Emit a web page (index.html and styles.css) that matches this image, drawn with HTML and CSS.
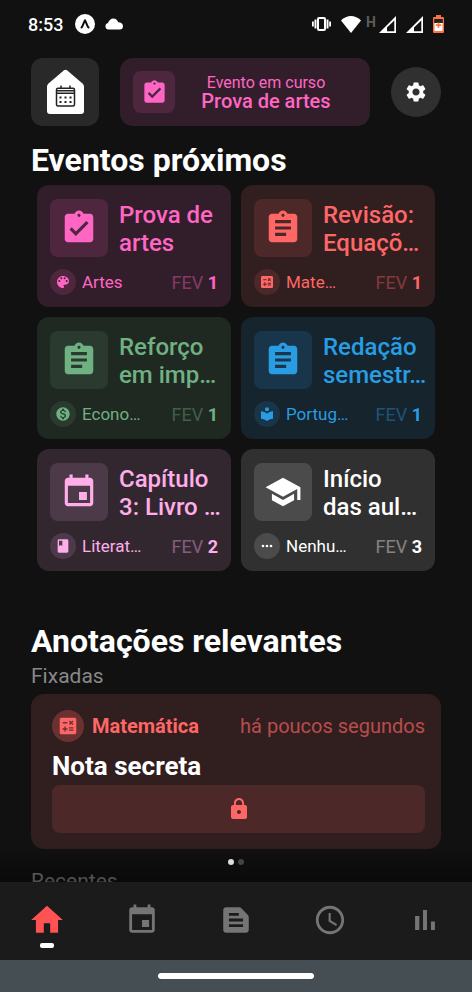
FILE: index.html
```html
<!DOCTYPE html>
<html lang="pt-BR">
<head>
<meta charset="utf-8">
<meta name="viewport" content="width=device-width, initial-scale=1">
<title>Início</title>
<link rel="stylesheet" href="styles.css">
</head>
<body>
<svg class="sprite" aria-hidden="true">
  <symbol id="task-done" viewBox="0 0 24 24"><path d="M19 3h-4.18C14.4 1.84 13.3 1 12 1c-1.3 0-2.4.84-2.82 2H5c-1.1 0-2 .9-2 2v14c0 1.1.9 2 2 2h14c1.1 0 2-.9 2-2V5c0-1.1-.9-2-2-2zm-7 0c.55 0 1 .45 1 1s-.45 1-1 1-1-.45-1-1 .45-1 1-1zm-2 14l-4-4 1.41-1.41L10 14.17l6.59-6.59L18 9l-8 8z"/></symbol>
  <symbol id="task" viewBox="0 0 24 24"><path d="M19 3h-4.18C14.4 1.84 13.3 1 12 1c-1.3 0-2.4.84-2.82 2H5c-1.1 0-2 .9-2 2v14c0 1.1.9 2 2 2h14c1.1 0 2-.9 2-2V5c0-1.1-.9-2-2-2zm-7 0c.55 0 1 .45 1 1s-.45 1-1 1-1-.45-1-1 .45-1 1-1zm2 14H7v-2h7v2zm3-4H7v-2h10v2zm0-4H7V7h10v2z"/></symbol>
  <symbol id="event" viewBox="0 0 24 24"><path d="M17 12h-5v5h5v-5zM16 1v2H8V1H6v2H5c-1.11 0-1.99.9-1.99 2L3 19c0 1.1.89 2 2 2h14c1.1 0 2-.9 2-2V5c0-1.1-.9-2-2-2h-1V1h-2zm3 18H5V8h14v11z"/></symbol>
  <symbol id="school" viewBox="0 0 24 24"><path d="M5 13.18v4L12 21l7-3.82v-4L12 17l-7-3.82zM12 3L1 9l11 6 9-4.91V17h2V9L12 3z"/></symbol>
  <symbol id="palette" viewBox="0 0 24 24"><path d="M12 3c-4.97 0-9 4.03-9 9s4.03 9 9 9c.83 0 1.5-.67 1.5-1.5 0-.39-.15-.74-.39-1.01-.23-.26-.38-.61-.38-.99 0-.83.67-1.5 1.5-1.5H16c2.76 0 5-2.24 5-5 0-4.42-4.03-8-9-8zm-5.5 9c-.83 0-1.5-.67-1.5-1.5S5.67 9 6.5 9 8 9.67 8 10.5 7.33 12 6.5 12zm3-4C8.67 8 8 7.33 8 6.5S8.67 5 9.5 5s1.5.67 1.5 1.5S10.33 8 9.5 8zm5 0c-.83 0-1.5-.67-1.5-1.5S13.67 5 14.5 5s1.5.67 1.5 1.5S15.33 8 14.5 8zm3 4c-.83 0-1.5-.67-1.5-1.5S16.67 9 17.5 9s1.5.67 1.5 1.5-.67 1.5-1.5 1.5z"/></symbol>
  <symbol id="calculate" viewBox="0 0 24 24"><path d="M19 3H5c-1.1 0-2 .9-2 2v14c0 1.1.9 2 2 2h14c1.1 0 2-.9 2-2V5c0-1.1-.9-2-2-2zm-5.97 4.06L14.09 6l1.41 1.41L16.91 6l1.06 1.06-1.41 1.41 1.41 1.41-1.06 1.06-1.41-1.4-1.41 1.41-1.06-1.06 1.41-1.41-1.41-1.42zm-6.78.66h5v1.5h-5v-1.5zM11.5 16h-2v2H8v-2H6v-1.5h2v-2h1.5v2h2V16zm6.5 1.25h-5v-1.5h5v1.5zm0-2.5h-5v-1.5h5v1.5z"/></symbol>
  <symbol id="money" viewBox="0 0 24 24"><path d="M12 2C6.48 2 2 6.48 2 12s4.48 10 10 10 10-4.48 10-10S17.52 2 12 2zm1.41 16.09V20h-2.67v-1.93c-1.71-.36-3.16-1.46-3.27-3.4h1.96c.1 1.05.82 1.87 2.65 1.87 1.96 0 2.4-.98 2.4-1.59 0-.83-.44-1.61-2.67-2.14-2.48-.6-4.18-1.62-4.18-3.67 0-1.72 1.39-2.84 3.11-3.21V4h2.67v1.95c1.86.45 2.79 1.86 2.85 3.39H14.3c-.05-1.11-.64-1.87-2.22-1.87-1.5 0-2.4.68-2.4 1.64 0 .84.65 1.39 2.67 1.91s4.18 1.39 4.18 3.91c-.01 1.83-1.38 2.83-3.12 3.16z"/></symbol>
  <symbol id="library" viewBox="0 0 24 24"><path d="M12 11.55C9.64 9.35 6.48 8 3 8v11c3.48 0 6.64 1.35 9 3.55 2.36-2.19 5.52-3.55 9-3.55V8c-3.48 0-6.64 1.35-9 3.55zM12 8c1.66 0 3-1.34 3-3s-1.34-3-3-3-3 1.34-3 3 1.34 3 3 3z"/></symbol>
  <symbol id="book" viewBox="0 0 24 24"><path d="M18 2H6c-1.1 0-2 .9-2 2v16c0 1.1.9 2 2 2h12c1.1 0 2-.9 2-2V4c0-1.1-.9-2-2-2zM6 4h5v8l-2.500-1.500L6 12V4z"/></symbol>
  <symbol id="more" viewBox="0 0 24 24"><circle cx="6" cy="12" r="2"/><circle cx="12" cy="12" r="2"/><circle cx="18" cy="12" r="2"/></symbol>
  <symbol id="settings" viewBox="0 0 24 24"><path d="M19.14 12.94c.04-.3.06-.61.06-.94 0-.32-.02-.64-.07-.94l2.03-1.58c.18-.14.23-.41.12-.61l-1.92-3.32c-.12-.22-.37-.29-.59-.22l-2.39.96c-.5-.38-1.03-.7-1.62-.94l-.36-2.54c-.04-.24-.24-.41-.48-.41h-3.84c-.24 0-.43.17-.47.41l-.36 2.54c-.59.24-1.13.57-1.62.94l-2.39-.96c-.22-.08-.47 0-.59.22L2.74 8.87c-.12.21-.08.47.12.61l2.03 1.58c-.05.3-.09.63-.09.94s.02.64.07.94l-2.03 1.58c-.18.14-.23.41-.12.61l1.92 3.32c.12.22.37.29.59.22l2.39-.96c.5.38 1.03.7 1.62.94l.36 2.54c.05.24.24.41.48.41h3.84c.24 0 .44-.17.47-.41l.36-2.54c.59-.24 1.13-.56 1.62-.94l2.39.96c.22.08.47 0 .59-.22l1.92-3.32c.12-.22.07-.47-.12-.61l-2.01-1.58zM12 15.600c-1.980 0-3.600-1.620-3.600-3.600s1.620-3.600 3.600-3.600 3.600 1.620 3.600 3.600-1.620 3.600-3.600 3.600z"/></symbol>
  <symbol id="lock" viewBox="0 0 24 24"><path d="M18 8h-1V6c0-2.760-2.240-5-5-5S7 3.240 7 6v2H6c-1.100 0-2 .9-2 2v10c0 1.100.9 2 2 2h12c1.100 0 2-.9 2-2V10c0-1.100-.9-2-2-2zm-6 9c-1.100 0-2-.9-2-2s.9-2 2-2 2 .9 2 2-.9 2-2 2zm3.100-9H8.900V6c0-1.710 1.390-3.100 3.100-3.100 1.710 0 3.100 1.390 3.100 3.100v2z"/></symbol>
  <symbol id="home" viewBox="0 0 24 24"><path d="M10 20v-6h4v6h5v-8h3L12 3 2 12h3v8z"/></symbol>
  <symbol id="note" viewBox="0 0 24 24"><path d="M20.410 8.410l-4.830-4.830c-.37-.37-.88-.58-1.410-.58H5c-1.100 0-2 .9-2 2v14c0 1.100.9 2 2 2h14c1.100 0 2-.9 2-2V9.830c0-.53-.21-1.040-.59-1.420zM7 7h7v2H7V7zm10 10H7v-2h10v2zm0-4H7v-2h10v2z"/></symbol>
  <symbol id="clock" viewBox="0 0 24 24"><path d="M11.990 2C6.470 2 2 6.480 2 12s4.470 10 9.990 10C17.520 22 22 17.520 22 12S17.520 2 11.990 2zM12 20c-4.420 0-8-3.580-8-8s3.580-8 8-8 8 3.580 8 8-3.580 8-8 8zm.5-13H11v6l5.250 3.150.75-1.230-4.500-2.670z"/></symbol>
  <symbol id="chart" viewBox="0 0 24 24"><path d="M5 9.200h3V19H5zM10.600 5h2.800v14h-2.800zm5.600 8H19v6h-2.800z"/></symbol>
  <symbol id="signal" viewBox="0 0 17 17"><path fill-rule="evenodd" d="M17 0V17H0zM15.300 4.500L8 11.500V15.300H15.300z"/></symbol>
</svg>

<div class="app">
  <div class="status">
    <span class="time">8:53</span>
    <svg class="status-app" viewBox="0 0 20 20"><circle cx="10" cy="10" r="10"/><path class="caret" d="M6.500 13.500C8 12 8.600 8.500 10 6.200C11.400 8.500 12 12 13.500 13.500"/></svg>
    <svg class="status-cloud" viewBox="0 0 18 12"><path d="M3.500 11.500A3.300 3.300 0 0 1 3 5C4.200 2 6 .5 8.200.5C10.800.5 12.400 2 13.200 4.300C16 4.300 18 5.800 18 8.200C18 10.200 16.700 11.500 14.800 11.500z"/></svg>
    <div class="status-right">
      <svg class="vibrate" viewBox="0 0 19 14"><rect x="6" y="1" width="7" height="12" rx="1" fill="none" stroke="#fff" stroke-width="2"/><path d="M2.500 2.500h2v9h-2zM0 4.500h1.800v5h-1.800zM14.500 2.500h2v9h-2zM17.200 4.500h1.800v5h-1.800z"/></svg>
      <svg class="wifi" viewBox="0 0 20 17"><path d="M10 17L0 4.500C5.800-1.500 14.200-1.500 20 4.500z"/></svg>
      <div class="mobile"><span class="network">H</span><svg class="bars"><use href="#signal"/></svg></div>
      <svg class="bars"><use href="#signal"/></svg>
      <svg class="battery" viewBox="0 0 11 18"><path fill="#fff" d="M1 8h9v9H1z"/><path fill="#ff7043" fill-rule="evenodd" d="M3 0h5v2h2q1 0 1 1v14q0 1-1 1H1q-1 0-1-1V3q0-1 1-1h2zM1.500 4V16h8V4z"/><path fill="#222" d="M1.500 4h8v4h-8z"/><path fill="#ff7043" d="M4.700 7.500h1.600v1.800h1.900v1.600H6.300v1.900H4.700v-1.900H2.800V9.300h1.900z"/></svg>
    </div>
  </div>

  <main class="content">
    <header class="top">
      <button class="logo" aria-label="Agenda">
        <svg viewBox="0 0 68 68"><path fill="#fff" d="M32.700 12.500Q34.500 11 36.300 12.500L51.500 25.500Q53 26.800 53 28.500V53Q53 56 50 56H19Q16 56 16 53V28.500Q16 26.800 17.500 25.500z"/><g fill="none" stroke="#222" stroke-width="1.500"><rect x="25.500" y="30.300" width="18" height="17.700" rx="1.500"/><path d="M25 32.700H44M25 35.300H44M30 27.500V31M39 27.500V31"/></g><g fill="#222"><path d="M28.500 38.500h2v2h-2zM33.500 38.500h2v2h-2zM38.500 38.500h2v2h-2zM28.500 43h2v2h-2zM33.500 43h2v2h-2zM38.500 43h2v2h-2z"/></g></svg>
      </button>
      <a class="current pink" href="#">
        <span class="tile"><svg><use href="#task-done"/></svg></span>
        <span class="current-text"><span>Evento em curso</span><strong>Prova de artes</strong></span>
      </a>
      <button class="settings" aria-label="Configurações"><svg><use href="#settings"/></svg></button>
    </header>

    <section>
      <h1>Eventos próximos</h1>
      <div class="events">
        <a class="card pink" href="#">
          <span class="card-top"><span class="tile"><svg><use href="#task-done"/></svg></span><span class="title">Prova de<br>artes</span></span>
          <span class="card-foot"><span class="dot"><svg><use href="#palette"/></svg></span><span class="subject">Artes</span><span class="date"><span>FEV</span> <b>1</b></span></span>
        </a>
        <a class="card red" href="#">
          <span class="card-top"><span class="tile"><svg><use href="#task"/></svg></span><span class="title">Revisão:<br>Equaçõ…</span></span>
          <span class="card-foot"><span class="dot"><svg><use href="#calculate"/></svg></span><span class="subject">Mate…</span><span class="date"><span>FEV</span> <b>1</b></span></span>
        </a>
        <a class="card green" href="#">
          <span class="card-top"><span class="tile"><svg><use href="#task"/></svg></span><span class="title">Reforço<br>em imp…</span></span>
          <span class="card-foot"><span class="dot"><svg><use href="#money"/></svg></span><span class="subject">Econo…</span><span class="date"><span>FEV</span> <b>1</b></span></span>
        </a>
        <a class="card blue" href="#">
          <span class="card-top"><span class="tile"><svg><use href="#task"/></svg></span><span class="title">Redação<br>semestr…</span></span>
          <span class="card-foot"><span class="dot"><svg><use href="#library"/></svg></span><span class="subject">Portug…</span><span class="date"><span>FEV</span> <b>1</b></span></span>
        </a>
        <a class="card lilac" href="#">
          <span class="card-top"><span class="tile"><svg><use href="#event"/></svg></span><span class="title">Capítulo<br>3: Livro …</span></span>
          <span class="card-foot"><span class="dot"><svg><use href="#book"/></svg></span><span class="subject">Literat…</span><span class="date"><span>FEV</span> <b>2</b></span></span>
        </a>
        <a class="card gray" href="#">
          <span class="card-top"><span class="tile"><svg><use href="#school"/></svg></span><span class="title">Início<br>das aul…</span></span>
          <span class="card-foot"><span class="dot"><svg><use href="#more"/></svg></span><span class="subject">Nenhu…</span><span class="date"><span>FEV</span> <b>3</b></span></span>
        </a>
      </div>
    </section>

    <section class="notes">
      <h1>Anotações relevantes</h1>
      <h2>Fixadas</h2>
      <article class="note red">
        <div class="note-head"><span class="dot"><svg><use href="#calculate"/></svg></span><strong>Matemática</strong><time>há poucos segundos</time></div>
        <h3>Nota secreta</h3>
        <button class="locked" aria-label="Desbloquear nota"><svg><use href="#lock"/></svg></button>
      </article>
      <div class="pager"><i class="on"></i><i></i></div>
      <h2>Recentes</h2>
    </section>
  </main>

  <nav class="tabs">
    <a class="tab active" href="#" aria-label="Início"><svg><use href="#home"/></svg></a>
    <a class="tab" href="#" aria-label="Calendário"><svg><use href="#event"/></svg></a>
    <a class="tab" href="#" aria-label="Anotações"><svg><use href="#note"/></svg></a>
    <a class="tab" href="#" aria-label="Horários"><svg><use href="#clock"/></svg></a>
    <a class="tab" href="#" aria-label="Notas"><svg><use href="#chart"/></svg></a>
  </nav>
  <div class="gesture"><span></span></div>
</div>
</body>
</html>
```
FILE: styles.css
```css
* { box-sizing: border-box; }

body {
  margin: 0;
  background: #111;
  color: #fff;
  font-family: Roboto, "Liberation Sans", sans-serif;
}

.sprite { position: absolute; width: 0; height: 0; }
svg { display: block; fill: currentColor; flex: none; }
a { color: inherit; text-decoration: none; }
button { border: 0; padding: 0; color: inherit; font: inherit; }
h1, h2, h3 { margin: 0; }

.app { display: flex; flex-direction: column; height: 100vh; }

/* Colour themes */
.pink { --c: #ff66c4; --bg: #321e2a; --tile: #4e273f; }
.red { --c: #ff6666; --bg: #311e1e; --tile: #4c2828; }
.green { --c: #6fb182; --bg: #202822; --tile: #2a3a2f; }
.blue { --c: #289de3; --bg: #15242d; --tile: #18354a; }
.lilac { --c: #ffaeea; --bg: #32272f; --tile: #4d3a49; }
.gray { --c: #fff; --bg: #303030; --tile: #4b4b4b; }

/* System status bar */
.status {
  flex: none;
  display: flex;
  align-items: center;
  height: 48px;
  padding: 0 28px;
}
.time { font-size: 18px; font-weight: 500; }
.status-app { width: 20px; height: 20px; margin: 0 10px 0 12px; }
.caret { fill: none; stroke: #111; stroke-width: 2; stroke-linecap: round; stroke-linejoin: round; }
.status-cloud { width: 18px; height: 12px; }
.status-right { display: flex; align-items: center; gap: 10px; margin-left: auto; }
.vibrate { width: 19px; height: 14px; }
.wifi { width: 20px; height: 17px; }
.mobile { display: flex; gap: 3px; margin-left: -5px; }
.network { color: #5c5c5c; font-size: 14px; font-weight: 700; line-height: 12px; }
.bars { width: 17px; height: 17px; }
.battery { width: 11px; height: 18px; }

/* Scrolling content */
.content {
  position: relative;
  flex: 1;
  min-height: 0;
  overflow: hidden;
  padding: 10px 31px 0;
}
.content::after {
  content: "";
  position: absolute;
  inset: auto 0 0;
  height: 36px;
  background: linear-gradient(rgba(0, 0, 0, 0), rgba(0, 0, 0, .45));
}

.top { display: flex; align-items: center; gap: 21px; }
.logo { width: 68px; height: 68px; border-radius: 12px; background: #292929; }
.current {
  flex: 1;
  display: flex;
  align-items: center;
  height: 68px;
  padding: 13px;
  border-radius: 13px;
  background: var(--bg);
  color: var(--c);
}
.current .tile { width: 42px; height: 42px; }
.current .tile svg { width: 27px; height: 27px; }
.current-text { flex: 1; text-align: center; font-size: 16px; line-height: 19px; }
.current-text > * { display: block; }
.current-text strong { font-size: 20px; font-weight: 500; }
.settings {
  display: grid;
  place-items: center;
  width: 50px;
  height: 50px;
  border-radius: 50%;
  background: #303030;
}
.settings svg { width: 24px; height: 24px; }

h1 { font-size: 32px; font-weight: 700; line-height: 38px; }
h2 { padding-top: 2px; font-size: 21px; font-weight: 400; line-height: 28px; color: #888; }

.tile {
  flex: none;
  display: grid;
  place-items: center;
  border-radius: 8px;
  background: var(--tile);
}
.dot {
  flex: none;
  display: grid;
  place-items: center;
  border-radius: 50%;
  background: var(--tile);
}

/* Upcoming events */
section { padding-top: 15px; }
.events {
  display: grid;
  grid-template-columns: 1fr 1fr;
  gap: 10px;
  padding: 6px 6px 0;
}
.card {
  min-width: 0;
  padding: 14px 13px 12px;
  border-radius: 12px;
  background: var(--bg);
  color: var(--c);
}
.card-top { display: flex; align-items: center; gap: 11px; white-space: nowrap; }
.card .tile { width: 58px; height: 58px; }
.card .tile svg { width: 38px; height: 38px; }
.title { padding-top: 2px; font-size: 24px; font-weight: 500; line-height: 28px; }
.card-foot { display: flex; align-items: center; margin-top: 12px; }
.card .dot { width: 26px; height: 26px; }
.card .dot svg { width: 16px; height: 16px; }
.subject { margin-left: 6px; font-size: 17px; }
.date { margin-left: auto; font-size: 18px; }
.date span { opacity: .4; }

/* Notes */
.notes { padding-top: 51px; }
.note {
  margin-top: 4px;
  padding: 16px 16px 16px 21px;
  border-radius: 13px;
  background: var(--bg);
}
.note-head { display: flex; align-items: center; gap: 8px; color: var(--c); font-size: 20px; }
.note-head time { margin-left: auto; opacity: .65; }
.note .dot { width: 32px; height: 32px; background: #6b3131; }
.note .dot svg { width: 22px; height: 22px; }
h3 { margin: 8px 0 3px; font-size: 26px; font-weight: 700; line-height: 32px; }
.locked {
  display: grid;
  place-items: center;
  width: 100%;
  height: 48px;
  border-radius: 8px;
  background: var(--tile);
  color: var(--c);
}
.locked svg { width: 24px; height: 24px; }
.pager { position: relative; z-index: 1; display: flex; justify-content: center; gap: 4px; padding: 10px 0 0; }
.pager i { width: 6px; height: 6px; border-radius: 50%; background: #444; }
.pager .on { background: #ddd; }

/* Bottom navigation */
.tabs { flex: none; display: flex; height: 78px; background: #1b1b1b; }
.tab {
  position: relative;
  flex: 1;
  display: grid;
  place-items: center;
  padding-bottom: 2px;
  color: #757575;
}
.tab svg { width: 34px; height: 34px; }
.tab.active { color: #ff5252; }
.tab.active svg { width: 38px; height: 38px; }
.active::after {
  content: "";
  position: absolute;
  bottom: 12px;
  left: calc(50% - 7px);
  width: 14px;
  height: 5px;
  border-radius: 2px;
  background: #fff;
}
.gesture { flex: none; display: grid; place-items: center; height: 32px; background: #454e53; }
.gesture span { width: 33%; height: 6px; border-radius: 3px; background: #fff; }
```
